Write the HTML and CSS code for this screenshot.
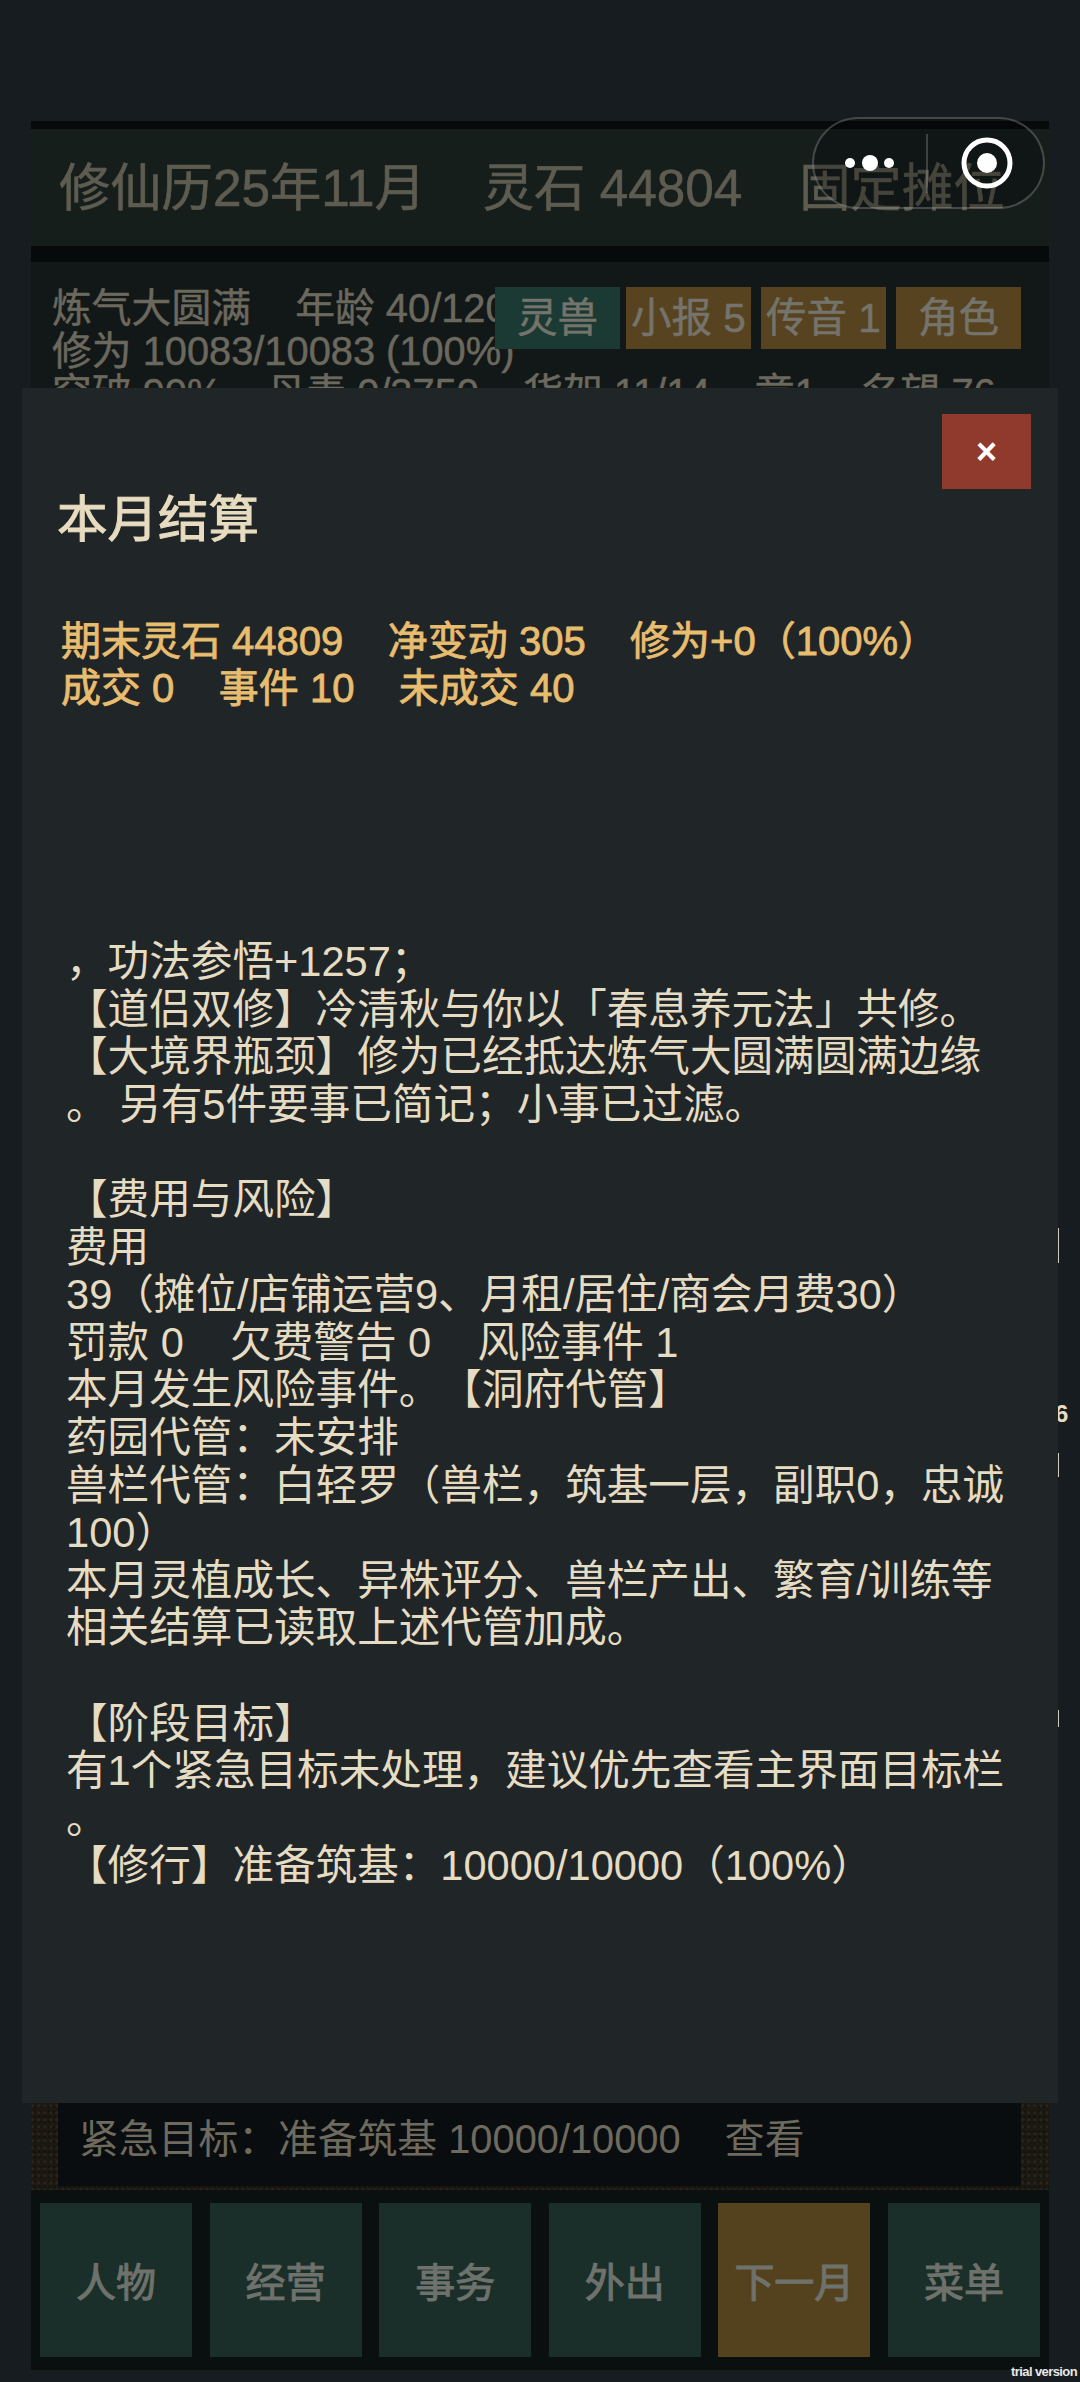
FILE: index.html
```html
<!DOCTYPE html>
<html lang="zh-CN">
<head>
    <meta charset="UTF-8">
    <meta name="viewport" content="width=device-width, initial-scale=1.0">
    <title>本月结算</title>
    <link rel="stylesheet" href="styles.css">
</head>
<body>

    <div class="frame">
        <div class="top-bar">修仙历25年11月    灵石 44804    固定摊位</div>

        <div class="stats">
            <div class="stats-text">炼气大圆满    年龄 40/120
修为 10083/10083 (100%)
突破 90%    丹毒 0/3750    货架 11/14    章1    名望 76</div>
            <div class="stats-buttons">
                <div class="tag tag-green">灵兽</div>
                <div class="tag">小报 5</div>
                <div class="tag">传音 1</div>
                <div class="tag">角色</div>
            </div>
        </div>

        <div class="goal">
            <div class="goal-inner">紧急目标：准备筑基 10000/10000    查看</div>
        </div>

        <div class="nav">
            <div class="nav-btn">人物</div>
            <div class="nav-btn">经营</div>
            <div class="nav-btn">事务</div>
            <div class="nav-btn">外出</div>
            <div class="nav-btn nav-btn-gold">下一月</div>
            <div class="nav-btn">菜单</div>
        </div>
    </div>

    <!-- bits of the page behind that stick out past the modal -->
    <i class="sliver sliver-a"></i>
    <b class="sliver-num">6</b>
    <i class="sliver sliver-b"></i>
    <i class="sliver sliver-c"></i>

    <div class="modal">
        <div class="close-btn">×</div>
        <h2 class="modal-title">本月结算</h2>
        <div class="summary">期末灵石 44809    净变动 305    修为+0（100%）
成交 0    事件 10    未成交 40</div>
        <div class="report">，功法参悟+1257；
【道侣双修】冷清秋与你以「春息养元法」共修。
【大境界瓶颈】修为已经抵达炼气大圆满圆满边缘
。 另有5件要事已简记；小事已过滤。

【费用与风险】
费用
39（摊位/店铺运营9、月租/居住/商会月费30）
罚款 0    欠费警告 0    风险事件 1
本月发生风险事件。【洞府代管】
药园代管：未安排
兽栏代管：白轻罗（兽栏，筑基一层，副职0，忠诚
100）
本月灵植成长、异株评分、兽栏产出、繁育/训练等
相关结算已读取上述代管加成。

【阶段目标】
有1个紧急目标未处理，建议优先查看主界面目标栏
。
【修行】准备筑基：10000/10000（100%）</div>
    </div>

    <div class="capsule">
        <svg width="233" height="92" viewBox="0 0 233 92">
            <circle cx="38" cy="46" r="5" fill="#fff"/>
            <circle cx="58" cy="46" r="8" fill="#fff"/>
            <circle cx="77" cy="46" r="5" fill="#fff"/>
            <line x1="115" y1="17" x2="115" y2="76" stroke="#fff" stroke-opacity="0.25" stroke-width="1.5"/>
            <circle cx="175" cy="46" r="23" fill="none" stroke="#fff" stroke-width="5"/>
            <circle cx="175" cy="46" r="10" fill="#fff"/>
        </svg>
    </div>

    <div class="trial">trial version</div>

</body>
</html>
```

FILE: styles.css
```css
* {
    box-sizing: border-box;
}
html, body {
    margin: 0;
    height: 2382px;
    overflow: hidden;
}
body {
    position: relative;
    background-color: #161c1f;
    font-family: "Liberation Sans", "Noto Sans CJK SC", sans-serif;
    padding: 121px 31px 12px;
}
.frame {
    height: 100%;
    display: flex;
    flex-direction: column;
    background-color: #070a0b;
    padding-top: 8px;
}
.top-bar {
    height: 117px;
    flex: none;
    background-color: #161e1c;
    color: #5e5c50;
    font-size: 51.3px;
    line-height: 119px;
    -webkit-text-stroke: 0.6px #5e5c50;
    padding-left: 28px;
    white-space: pre;
    overflow: hidden;
}
.stats {
    position: relative;
    flex: 1;
    margin-top: 16px;
    background-color: #121718;
    padding: 25px 0 0 21px;
}
.stats-text {
    color: #6b685d;
    font-size: 39.8px;
    line-height: 42.5px;
    -webkit-text-stroke: 0.5px #6b685d;
    white-space: pre;
}
.stats-buttons {
    position: absolute;
    top: 25px;
    right: 28px;
    display: flex;
    gap: 6px;
}
.tag {
    width: 125px;
    height: 62px;
    background-color: #574320;
    color: #74736c;
    font-size: 40.5px;
    line-height: 62px;
    -webkit-text-stroke: 0.5px #74736c;
    text-align: center;
    white-space: nowrap;
}
.tag + .tag {
    margin-left: 4px;
}
.tag-green {
    background-color: #1b3a33;
}
.tag-green + .tag {
    margin-left: 0;
}
.goal {
    flex: none;
    height: 87px;
    padding: 0 28px 4px 27px;
    background-color: #1c1912;
    background-image: radial-gradient(circle at 30% 40%, #2a251b 0 1px, transparent 2px), radial-gradient(circle at 70% 80%, #14120d 0 1px, transparent 2px);
    background-size: 6px 7px, 5px 5px;
}
.goal-inner {
    height: 100%;
    background-color: #0a0d0f;
    color: #6e6b5e;
    font-size: 39.8px;
    line-height: 72px;
    padding-left: 21px;
    white-space: pre;
}
.nav {
    flex: none;
    height: 180px;
    display: flex;
    justify-content: space-between;
    padding: 13px 9px;
    background-color: #0a0f0f;
}
.nav-btn {
    width: 152px;
    background-color: #1a2f29;
    color: #6f726c;
    font-size: 40px;
    -webkit-text-stroke: 1px #6f726c;
    display: flex;
    align-items: center;
    justify-content: center;
}
.nav-btn-gold {
    background-color: #54421f;
}
.modal {
    position: absolute;
    left: 22px;
    top: 388px;
    width: 1036px;
    height: 1715px;
    background-color: #202627;
    padding: 0 38px 0 35px;
}
.close-btn {
    position: absolute;
    top: 26px;
    right: 27px;
    width: 89px;
    height: 75px;
    background-color: #8f3a2c;
    color: #fff;
    font-size: 36px;
    font-weight: bold;
    line-height: 75px;
    text-align: center;
}
.modal-title {
    margin: 0;
    padding-top: 103px;
    height: 201px;
    color: #e8dcc0;
    font-size: 50.5px;
    line-height: 58px;
    font-weight: normal;
    -webkit-text-stroke: 1px #e8dcc0;
}
.summary {
    margin-top: 29px;
    margin-left: 4px;
    color: #e8bd6f;
    font-size: 40px;
    line-height: 47px;
    -webkit-text-stroke: 0.8px #e8bd6f;
    white-space: pre;
}
.report {
    position: absolute;
    top: 550px;
    left: 44px;
    color: #e6dcc4;
    font-size: 41.6px;
    line-height: 47.6px;
    text-spacing-trim: space-all;
    white-space: pre;
}
.capsule {
    position: absolute;
    left: 812px;
    top: 117px;
    width: 233px;
    height: 92px;
    border-radius: 46px;
    box-shadow: inset 0 0 0 2px rgba(255, 255, 255, 0.22);
    background-color: rgba(0, 0, 0, 0.25);
}
.sliver {
    position: absolute;
    left: 1058px;
    width: 1px;
    background-color: #cfcabb;
}
.sliver-a {
    top: 1228px;
    height: 35px;
}
.sliver-b {
    top: 1453px;
    height: 24px;
}
.sliver-c {
    top: 1710px;
    height: 17px;
}
.sliver-num {
    position: absolute;
    left: 1055px;
    top: 1400px;
    color: #e6dcc4;
    font-size: 24px;
    line-height: 28px;
}
.trial {
    position: absolute;
    right: 3px;
    top: 2364px;
    color: #e8e8e8;
    font-size: 13px;
    line-height: 16px;
    font-weight: bold;
    letter-spacing: -0.6px;
}
```
